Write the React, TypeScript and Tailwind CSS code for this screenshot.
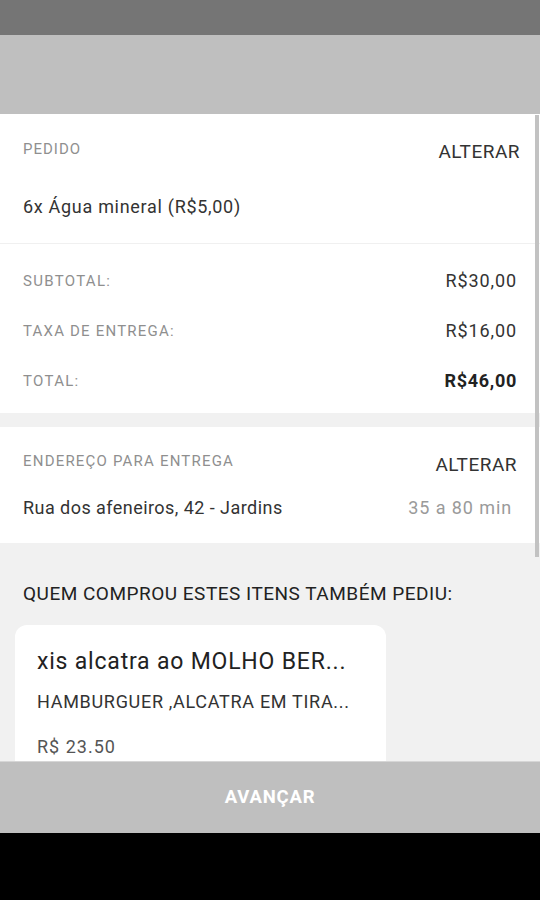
export default function App() {
  return (
    <div className="w-[540px] h-[900px] flex flex-col bg-black font-['Roboto',sans-serif] overflow-hidden">
      {/* barra de status */}
      <div className="h-[35px] bg-[#757575] shrink-0" />
      {/* cabeçalho */}
      <div className="h-[79px] bg-[#bfbfbf] shrink-0" />

      {/* conteúdo rolável */}
      <div className="relative flex-1 bg-[#f1f1f1] overflow-hidden">
        <div className="flex flex-col">
          {/* Pedido */}
          <section className="bg-white px-[23px] pt-[25px] pb-[24px] border-b border-[#f0f0f0]">
            <div className="flex items-start justify-between">
              <span className="text-[15px] leading-[20px] tracking-[1px] text-[#8f8f8f]">PEDIDO</span>
              <span className="text-[19px] leading-[24px] tracking-[0.5px] text-[#333] pt-[1px] -mr-[3px]">ALTERAR</span>
            </div>
            <p className="text-[18px] leading-[24px] tracking-[0.7px] text-[#333] pt-[31px]">6x Água mineral (R$5,00)</p>
          </section>

          {/* Totais */}
          <section className="bg-white px-[23px] pt-[25px] pb-[20px] flex flex-col gap-[26px]">
            <div className="flex items-center justify-between leading-[24px]">
              <span className="text-[15px] tracking-[1.3px] text-[#8f8f8f]">SUBTOTAL:</span>
              <span className="text-[18px] tracking-[0.9px] text-[#333]">R$30,00</span>
            </div>
            <div className="flex items-center justify-between leading-[24px]">
              <span className="text-[15px] tracking-[1.2px] text-[#8f8f8f]">TAXA DE ENTREGA:</span>
              <span className="text-[18px] tracking-[0.9px] text-[#333]">R$16,00</span>
            </div>
            <div className="flex items-center justify-between leading-[24px]">
              <span className="text-[15px] tracking-[1.3px] text-[#8f8f8f]">TOTAL:</span>
              <span className="text-[18px] tracking-[0.7px] font-bold text-[#222]">R$46,00</span>
            </div>
          </section>

          <div className="h-[14px]" />

          {/* Endereço */}
          <section className="bg-white px-[23px] pt-[24px] pb-[23px]">
            <div className="flex items-start justify-between">
              <span className="text-[15px] leading-[20px] tracking-[1.2px] text-[#8f8f8f]">ENDEREÇO PARA ENTREGA</span>
              <span className="text-[19px] leading-[24px] tracking-[0.5px] text-[#333] pt-[2px]">ALTERAR</span>
            </div>
            <div className="flex items-center justify-between pt-[19px] leading-[24px]">
              <span className="text-[18px] tracking-[0.45px] text-[#333]">Rua dos afeneiros, 42 - Jardins</span>
              <span className="text-[18px] tracking-[0.9px] text-[#9a9a9a] pr-[5px]">35 a 80 min</span>
            </div>
          </section>

          {/* Sugestões */}
          <section className="pt-[39px] pb-[20px]">
            <h2 className="px-[23px] text-[19px] leading-[24px] tracking-[0.5px] text-[#222]">
              QUEM COMPROU ESTES ITENS TAMBÉM PEDIU:
            </h2>
            <div className="flex gap-3 pl-[15px] pt-[19px]">
              <div className="w-[371px] bg-white rounded-[12px] px-[22px] pt-[23px] pb-[20px]">
                <p className="text-[23px] leading-[28px] tracking-[0.8px] text-[#222] whitespace-nowrap">xis alcatra ao MOLHO BER...</p>
                <p className="text-[18px] leading-[24px] tracking-[0.7px] text-[#333] pt-[14px] whitespace-nowrap">HAMBURGUER ,ALCATRA EM TIRA...</p>
                <p className="text-[18px] leading-[24px] tracking-[1px] text-[#555] pt-[21px]">R$ 23.50</p>
              </div>
            </div>
          </section>
        </div>

        {/* barra de rolagem */}
        <div className="absolute right-[1px] top-[1px] w-[4px] h-[442px] bg-[#c2c2c2]" />
      </div>

      {/* botão avançar */}
      <button className="h-[72px] shrink-0 w-full bg-[#bfbfbf] border-t border-[#d6d6d6] shadow-[0_-3px_6px_rgba(0,0,0,0.04)] text-white text-[18.5px] font-bold tracking-[0.8px]">
        AVANÇAR
      </button>
      <div className="h-[67px] bg-black shrink-0" />
    </div>
  );
}
